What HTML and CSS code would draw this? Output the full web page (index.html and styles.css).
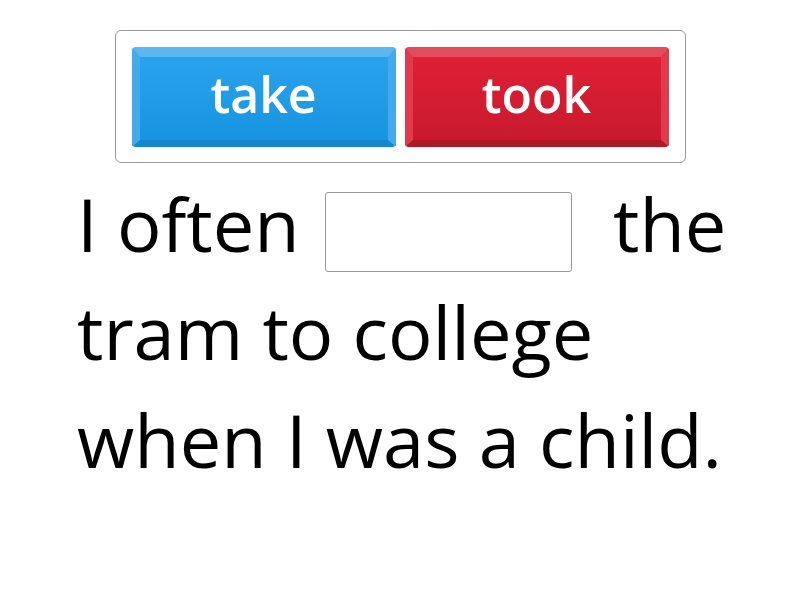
FILE: index.html
```html
<!DOCTYPE html>
<html>
<head>
<meta charset="utf-8">
<link rel="stylesheet" href="styles.css">
</head>
<body>
<div class="page">
  <div class="choices">
    <div class="tile tile-blue">take</div>
    <div class="tile tile-red">took</div>
  </div>
  <p class="sentence">I often <span class="blank"></span> the tram to college when I was a child.</p>
</div>
</body>
</html>
```
FILE: styles.css
```css
html, body {
  margin: 0;
  padding: 0;
  background: #ffffff;
}
.page {
  width: 800px;
  height: 600px;
  padding-top: 30px;
  box-sizing: border-box;
  font-family: "Open Sans", "Noto Sans", sans-serif;
}
.choices {
  width: 571px;
  height: 133px;
  margin: 0 auto;
  box-sizing: border-box;
  border: 1.5px solid #999999;
  border-radius: 6px;
  padding: 16px 16px 0 16px;
  display: flex;
  gap: 9px;
}
.tile {
  width: 264px;
  height: 100px;
  box-sizing: border-box;
  border-radius: 4px;
  display: flex;
  align-items: center;
  justify-content: center;
  color: #ffffff;
  font-size: 50px;
  font-weight: 600;
  border-style: solid;
  border-width: 10px 8px 7px 8px;
  padding-bottom: 10px;
}
.tile-blue {
  background: linear-gradient(#2aa2ec, #1795e0);
  border-color: #5cb6ef #44aaec #1386cf #44aaec;
}
.tile-red {
  background: linear-gradient(#df1f35, #c81a2e);
  border-color: #e24c5d #e13a4c #b01727 #e13a4c;
}
.sentence {
  margin: 7px 0 0 77px;
  width: 660px;
  font-size: 74px;
  line-height: 108px;
  color: #000000;
}
.blank {
  display: inline-block;
  width: 247px;
  height: 80px;
  box-sizing: border-box;
  border: 1.5px solid #999999;
  border-radius: 3px;
  vertical-align: middle;
  margin: 0 22px 0 6px;
}
```
